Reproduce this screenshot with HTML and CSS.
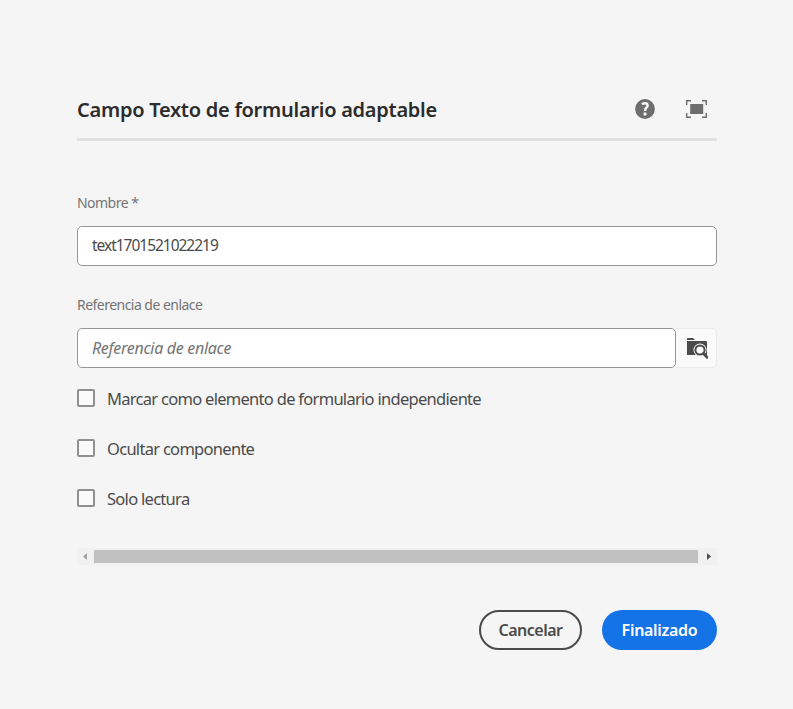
FILE: index.html
```
<!DOCTYPE html>
<html lang="es">
<head>
<meta charset="utf-8">
<title>Campo Texto de formulario adaptable</title>
<link rel="stylesheet" href="styles.css">
</head>
<body>
<main class="dialog">
  <header class="header">
    <h1 class="title"><span>Campo Texto de formulario adaptable</span></h1>
    <div class="actions">
      <svg class="icon" width="20" height="20" viewBox="0 0 20 20"><circle cx="10" cy="10" r="9.9" fill="#6e6e6e"/><path d="M7 5.200Q8.300 4.300 10 4.300Q12.600 4.300 12.600 6.500Q12.600 7.800 11.300 8.800Q10 9.900 10.100 12" fill="none" stroke="#f5f5f5" stroke-width="2.500"/><circle cx="10" cy="15" r="1.700" fill="#f5f5f5"/></svg>
      <svg class="icon" width="21" height="18" viewBox="0 0 21 18"><path d="M4.200 4h13v10h-13z" fill="#6e6e6e"/><path d="M.7 5V.7H5M16 .7h4.300V5M20.300 13v4.300H16M5 17.300H.7V13" fill="none" stroke="#6e6e6e" stroke-width="1.400"/></svg>
    </div>
  </header>
  <form class="form">
    <label class="label label-name" for="name"><span>Nombre *</span></label>
    <input class="input name-input" id="name" type="text" value="text1701521022219">
    <label class="label label-ref" for="ref"><span>Referencia de enlace</span></label>
    <div class="picker">
      <input class="input picker-input" id="ref" type="text" placeholder="Referencia de enlace">
      <button class="picker-button" type="button" aria-label="Examinar">
        <svg width="22" height="22" viewBox="0 0 22 22"><path d="M1 3V1.800Q1 1 1.800 1H7l1.800 2z" fill="#4b4b4b"/><path d="M1 4h19q1 0 1 1v13H1z" fill="#4b4b4b"/><circle cx="14" cy="13" r="6.500" fill="#fafafa"/><path d="M12 18h10v4H10z" fill="#fafafa"/><circle cx="14" cy="13" r="4.600" fill="#fafafa" stroke="#4b4b4b" stroke-width="2"/><path d="M17.300 16.500l4 4" stroke="#4b4b4b" stroke-width="2.600" stroke-linecap="round"/></svg>
      </button>
    </div>
    <label class="check"><input type="checkbox" class="box"><span>Marcar como elemento de formulario independiente</span></label>
    <label class="check"><input type="checkbox" class="box"><span>Ocultar componente</span></label>
    <label class="check"><input type="checkbox" class="box"><span>Solo lectura</span></label>
    <div class="scrollbar">
      <svg width="17" height="17" viewBox="0 0 17 17"><path d="M10 5v7L6 8.500z" fill="#a3a3a3"/></svg>
      <div class="thumb"></div>
      <svg width="19" height="17" viewBox="0 0 19 17"><path d="M9 5v7l4-3.500z" fill="#505050"/></svg>
    </div>
    <footer class="footer">
      <button class="button cancel" type="button"><span>Cancelar</span></button>
      <button class="button done" type="button"><span>Finalizado</span></button>
    </footer>
  </form>
</main>
</body>
</html>
```
FILE: styles.css
```
* { box-sizing: border-box; }
body { margin: 0; background: #f5f5f5; color: #4b4b4b; font-family: "Noto Sans", sans-serif; }
.dialog { width: 640px; margin: 90px 0 0 77px; }
.header { display: flex; justify-content: space-between; height: 51px; border-bottom: 3px solid #e1e1e1; }
.title { margin: 0; font-size: 20px; line-height: 39px; font-weight: 600; letter-spacing: -0.26px; color: #2c2c2c; white-space: nowrap; }
.actions { display: flex; gap: 31px; align-items: center; height: 38px; padding-right: 10px; }
.form { display: flex; flex-direction: column; }
.label { font-size: 14px; line-height: 20px; letter-spacing: -0.53px; color: #747474; }
.label-name { margin: 52px 0 13px; }
.label-ref { margin: 29px 0 13px; }
.input { width: 100%; height: 40px; padding: 0 14px; border: 1px solid #959595; border-radius: 5px; background: #fff; color: #4b4b4b; font: inherit; font-size: 16px; outline: none; }
.name-input { font-size: 15.5px; letter-spacing: -1.02px; padding-bottom: 2px; }
.picker-input { width: 599px; letter-spacing: -0.3px; }
.input::placeholder { color: #747474; opacity: 1; font-style: italic; }
.picker { display: flex; margin-bottom: 6px; }
.picker-button { width: 41px; height: 40px; padding: 0 0 0 2px; border: 1px solid #eaeaea; border-left: 0; border-radius: 0 5px 5px 0; background: #fafafa; display: grid; place-items: center; }
.check { height: 50px; display: flex; align-items: center; gap: 12px; font-size: 16.5px; letter-spacing: -0.71px; white-space: nowrap; }
.check span { padding-bottom: 2px; }
.box { appearance: none; width: 18px; height: 18px; margin: 0; border: 2px solid #909090; border-radius: 2px; background: #fafafa; position: relative; top: -1px; }
.scrollbar { display: flex; height: 17px; margin-top: 24px; background: #f1f1f1; align-items: center; }
.thumb { flex: 1; height: 13px; background: #c1c1c1; }
.footer { display: flex; justify-content: flex-end; gap: 20px; margin-top: 45px; }
.button { height: 40px; border-radius: 20px; font: inherit; font-size: 16px; font-weight: 600; padding: 0; }
.cancel { width: 103px; border: 2px solid #4b4b4b; background: transparent; color: #4b4b4b; letter-spacing: -0.5px; }
.done { width: 115px; border: 0; background: #1473e6; color: #fff; letter-spacing: -0.3px; }
```
